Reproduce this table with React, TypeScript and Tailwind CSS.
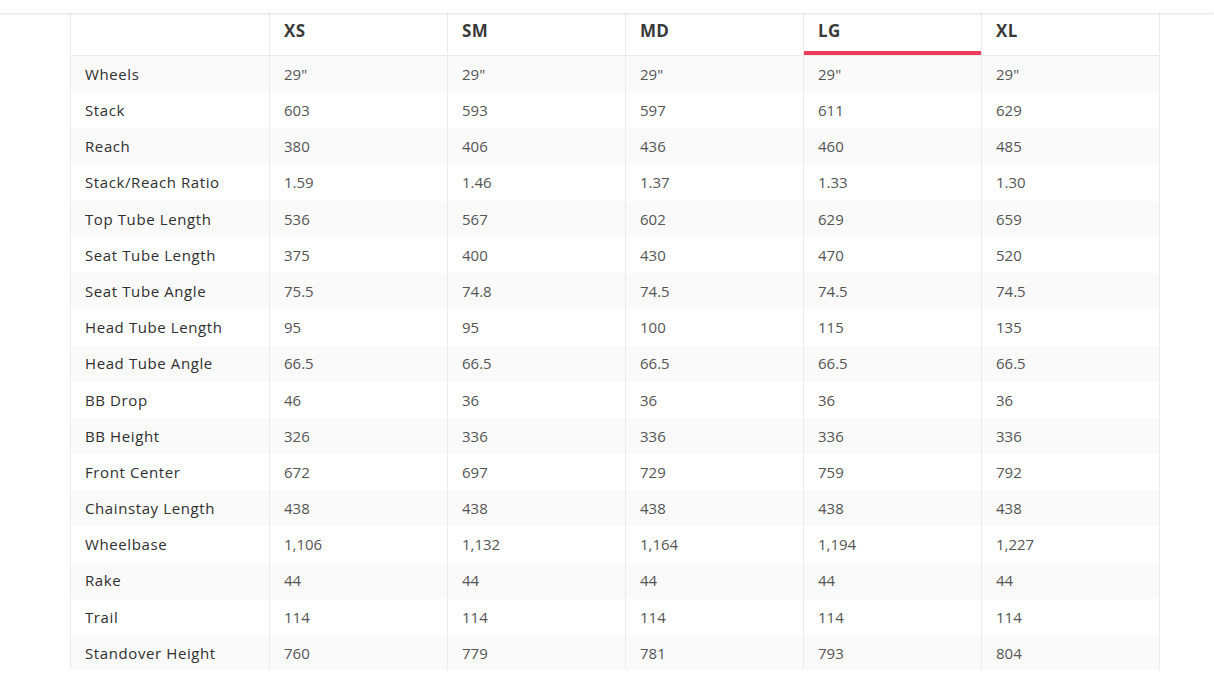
import React from 'react'

const sizes = ['XS', 'SM', 'MD', 'LG', 'XL']

const rows: [string, string[]][] = [
  ['Wheels', ['29"', '29"', '29"', '29"', '29"']],
  ['Stack', ['603', '593', '597', '611', '629']],
  ['Reach', ['380', '406', '436', '460', '485']],
  ['Stack/Reach Ratio', ['1.59', '1.46', '1.37', '1.33', '1.30']],
  ['Top Tube Length', ['536', '567', '602', '629', '659']],
  ['Seat Tube Length', ['375', '400', '430', '470', '520']],
  ['Seat Tube Angle', ['75.5', '74.8', '74.5', '74.5', '74.5']],
  ['Head Tube Length', ['95', '95', '100', '115', '135']],
  ['Head Tube Angle', ['66.5', '66.5', '66.5', '66.5', '66.5']],
  ['BB Drop', ['46', '36', '36', '36', '36']],
  ['BB Height', ['326', '336', '336', '336', '336']],
  ['Front Center', ['672', '697', '729', '759', '792']],
  ['Chainstay Length', ['438', '438', '438', '438', '438']],
  ['Wheelbase', ['1,106', '1,132', '1,164', '1,194', '1,227']],
  ['Rake', ['44', '44', '44', '44', '44']],
  ['Trail', ['114', '114', '114', '114', '114']],
  ['Standover Height', ['760', '779', '781', '793', '804']],
]

const active = 'LG'

export default function App() {
  return (
    <div
      className="w-[1214px] h-[683px] overflow-hidden bg-white"
      style={{ fontFamily: '"Open Sans", "Liberation Sans", sans-serif' }}
    >
      <div className="h-[13px] bg-white shadow-[0_1px_2px_rgba(0,0,0,0.12)] relative z-10" />
      <div className="ml-[70px] w-[1090px] h-[657px] overflow-hidden">
        <div className="grid grid-cols-[200px_repeat(5,1fr)] h-[43px] border-b border-[#ebebeb]">
          <div className="border-l border-r border-[#ebebeb]" />
          {sizes.map((s) => (
            <div
              key={s}
              className="relative flex items-center px-[14px] pb-[7px] border-r border-[#ebebeb] text-[17px] font-bold tracking-[0.3px] text-[#3a3a3a]"
            >
              {s}
              {s === active && (
                <div className="absolute left-0 right-0 bottom-0 h-[4px] bg-[#ef3b5c]" />
              )}
            </div>
          ))}
        </div>
        {rows.map(([label, vals], i) => (
          <div
            key={label}
            className={`grid grid-cols-[200px_repeat(5,1fr)] h-[36.2px] ${
              i % 2 === 0 ? 'bg-[#fafafa]' : 'bg-white'
            }`}
          >
            <div className="flex items-center px-[14px] border-l border-r border-[#ebebeb] text-[15px] font-medium tracking-[0.6px] text-[#2f2f2f]">
              {label}
            </div>
            {vals.map((v, j) => (
              <div
                key={j}
                className="flex items-center px-[14px] border-r border-[#ebebeb] text-[15px] text-[#555]"
              >
                {v}
              </div>
            ))}
          </div>
        ))}
      </div>
    </div>
  )
}
